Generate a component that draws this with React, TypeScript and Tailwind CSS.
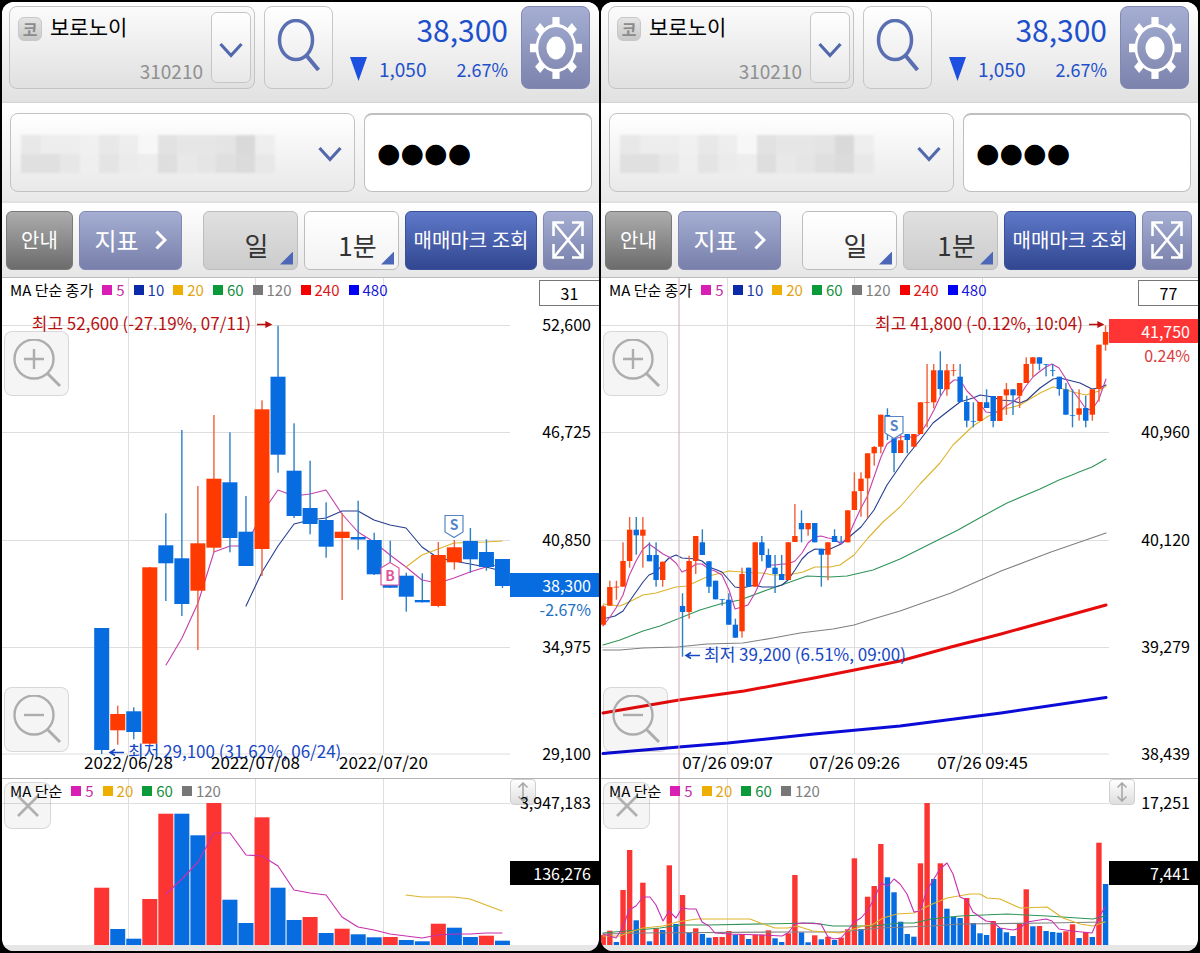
import React, { useState } from 'react';

// [slot, high, body top, body bottom, low, rising]
type Candle = [number, number, number, number, number, boolean];
type Line = { color: string; width?: number; points: string };
type Period = { label: string; square: string; text: string };
type Mark = { x: number; y: number; kind: 'B' | 'S' };
type Note = { x: number; y: number; text: string };

interface ChartData {
  step: number;
  start: number;
  bodyWidth: number;
  candles: Candle[];
  lines: Line[];
  marks: Mark[];
  high: Note;
  low: Note;
  dates: string[];
  crosshair?: number;
  volumes: number[];
  rising: number[];
  volumeLines: Line[];
}

const PINK = '#c43fae';
const NAVY = '#263c8f';
const GOLD = '#ddb32c';
const GREEN = '#2f9457';
const GRAY = '#808080';

const TOP = 278;
const VOLUME_TOP = 779;
const BASELINE = 945;
const gridX = [126.5, 253.5, 381.5];
const gridY = [325.5, 432.5, 540.5, 647.5, 754];

const periods: Period[] = [
  { label: '5', square: 'bg-[#d81eb4]', text: 'text-[#c42ca8]' },
  { label: '10', square: 'bg-[#0a2aa8]', text: 'text-[#1a3aa8]' },
  { label: '20', square: 'bg-[#eeae00]', text: 'text-[#dfa512]' },
  { label: '60', square: 'bg-[#0b9a3a]', text: 'text-[#129040]' },
  { label: '120', square: 'bg-[#777777]', text: 'text-[#808080]' },
  { label: '240', square: 'bg-[#f40000]', text: 'text-[#e01414]' },
  { label: '480', square: 'bg-[#0000f4]', text: 'text-[#1414d8]' },
];
const volumePeriods = [periods[0], periods[2], periods[3], periods[4]];

const daily: ChartData = {
  step: 16.03,
  start: 99.7,
  bodyWidth: 15,
  candles: [
    [0, 628, 628, 750, 754, false],
    [1, 705.7, 714, 730.3, 744.7, true],
    [2, 707.3, 711.3, 732, 739.3, false],
    [3, 567, 567.3, 743.7, 745, true],
    [4, 513.3, 545.3, 563.3, 601, false],
    [5, 430, 558.3, 604, 616, false],
    [6, 486, 543.3, 590.7, 650, true],
    [7, 415, 478.7, 547.7, 552, true],
    [8, 432.3, 482.3, 538, 552.3, false],
    [9, 496, 531.7, 566, 566, false],
    [10, 400.3, 409.3, 549, 576, true],
    [11, 325.7, 376.7, 454.7, 472.7, false],
    [12, 423.3, 470.7, 516, 518, false],
    [13, 460.7, 508, 524, 534.3, false],
    [14, 502.3, 520, 546.7, 557.7, false],
    [15, 513, 531.7, 538, 600, true],
    [16, 500.7, 537, 539.5, 549.7, false],
    [17, 532.7, 540, 574.3, 575, false],
    [18, 540.7, 585, 587.7, 588, false],
    [19, 572.7, 575.7, 596.7, 611.7, false],
    [20, 573.3, 600, 602.3, 602.5, false],
    [21, 542, 555, 606, 607.3, true],
    [22, 540, 547.3, 562.3, 569.7, true],
    [23, 528, 541, 559.3, 572.7, false],
    [24, 539.3, 552, 567, 570.7, false],
    [25, 559, 559, 586, 588, false],
  ],
  lines: [
    { color: PINK, points: '164,665 180,638 196,603 212,552 228,546 244,546 260,513 276,490 292,496 308,494 324,490 340,514 356,532 372,542 388,555 404,567 420,580 436,583 452,578 468,572 484,567 500,564' },
    { color: NAVY, points: '244,606 260,572 276,546 292,524 308,520 324,518 340,511 356,511 372,520 388,525 404,528 420,547 436,558 452,561 468,564 484,567 500,571' },
    { color: GOLD, points: '404,567 420,555 436,549 452,543 484,542 500,541' },
  ],
  marks: [
    { x: 388, y: 562, kind: 'B' },
    { x: 452, y: 515, kind: 'S' },
  ],
  high: { x: 249, y: 324.5, text: '최고 52,600 (-27.19%, 07/11)' },
  low: { x: 126, y: 752.5, text: '최저 29,100 (31.62%, 06/24)' },
  dates: ['2022/06/28', '2022/07/08', '2022/07/20'],
  volumes: [
    887.7, 929, 938.7, 899, 813.7, 813.7, 835.3, 803, 899.7, 923, 817.3, 887.7, 920, 917, 933, 928.7, 934.3, 937.3, 937, 940, 941.3, 923.7, 927.7, 937, 935.7, 940.7,
  ],
  rising: [0, 3, 4, 7, 10, 13, 15, 18, 21, 24],
  volumeLines: [
    { color: '#c72fb0', points: '164,894 180,879 196,862 212,833 228,833 244,855 260,856 276,866 292,890 308,893 324,895 340,917 356,927 372,930 388,934 404,936 420,938 436,935 452,934 468,934 484,933 500,933' },
    { color: GOLD, points: '404,895 420,897 436,897 452,897 468,899 484,905 500,911' },
  ],
};

const minute: ChartData = {
  step: 6.61,
  start: 2.2,
  bodyWidth: 5.4,
  candles: [
    [0, 605, 606.3, 624.7, 626, true],
    [1, 580.7, 587, 605.7, 605.7, true],
    [2, 580.7, 586.7, 587.5, 599.7, true],
    [3, 542.3, 561, 586.7, 586.7, true],
    [4, 517, 529.7, 561, 567.7, true],
    [5, 517, 529.7, 535.3, 554.7, false],
    [6, 517, 529.7, 535.7, 567.7, true],
    [7, 542.3, 555, 561.3, 561.3, false],
    [8, 542.3, 555, 580, 586.7, false],
    [9, 561.7, 561.7, 580, 586.7, true],
    [12, 593.3, 606, 612, 656.7, false],
    [13, 555.7, 561, 612, 618.7, true],
    [14, 536, 536, 561, 574, true],
    [15, 529.3, 542.3, 555, 555, false],
    [16, 561.3, 561.3, 586.7, 593, false],
    [17, 580.7, 580.7, 599.3, 599.3, false],
    [18, 599.3, 599.3, 600, 605.7, false],
    [19, 593.3, 599.7, 624.7, 624.7, false],
    [20, 618.7, 624.7, 637.7, 637.7, false],
    [21, 567.7, 574, 631.3, 637.7, true],
    [22, 567.7, 567.7, 586.7, 586.7, false],
    [23, 542.3, 542.3, 586.7, 586.7, true],
    [24, 536, 542.3, 555, 561.3, false],
    [25, 548.7, 555, 567.7, 567.7, false],
    [26, 555, 567.7, 574, 593, false],
    [27, 555, 574, 580, 580, false],
    [28, 542.3, 542.3, 580, 580, true],
    [29, 504, 536, 542, 542, true],
    [30, 510.3, 523, 529.3, 542.3, false],
    [31, 523, 523, 529.3, 535.7, true],
    [32, 523, 523, 542.3, 542.3, false],
    [33, 548.7, 548.7, 554.7, 586.7, false],
    [34, 542.3, 542.3, 554.7, 580.3, true],
    [35, 529.3, 536, 542, 542, false],
    [36, 536, 541.7, 542.5, 542.5, false],
    [37, 510.3, 510.3, 542.3, 542.3, true],
    [38, 472.3, 491.3, 510, 510, true],
    [39, 472.3, 478.7, 491, 516.7, true],
    [40, 453.3, 453.3, 478.3, 518.3, true],
    [41, 446, 447, 453.3, 465.7, true],
    [42, 414.7, 414.7, 446.7, 453.3, true],
    [43, 408.3, 415, 433, 440, false],
    [44, 425, 438.3, 453, 472.3, false],
    [45, 435, 440.3, 453, 453, true],
    [46, 434, 434, 440, 453.3, false],
    [47, 434, 434, 446.7, 446.7, true],
    [48, 402.3, 402.3, 434, 434, true],
    [49, 364, 402, 402.7, 427.3, true],
    [50, 364, 370.3, 402.3, 408.3, true],
    [51, 351.3, 370.3, 389, 395.7, false],
    [52, 364, 370.3, 389.3, 395.7, true],
    [53, 364, 370, 370.7, 376.3, true],
    [54, 364, 376.7, 402, 402, false],
    [55, 395.7, 402, 420.7, 427.3, false],
    [56, 402.3, 421, 421.7, 427.3, false],
    [57, 402, 402, 421, 421, true],
    [58, 389.3, 402.3, 408, 408, false],
    [59, 396, 396, 421, 427.3, false],
    [60, 396, 396, 421, 421, true],
    [61, 383, 389.3, 395.3, 415, true],
    [62, 389.3, 389.3, 395.3, 415, false],
    [63, 383, 383, 395.7, 408, true],
    [64, 357.3, 364, 383, 383, true],
    [65, 357.3, 357.3, 363.7, 376.7, true],
    [66, 357.3, 357.3, 363.7, 370.3, false],
    [67, 364, 364, 364.7, 376.3, false],
    [68, 364, 370, 370.7, 376.3, false],
    [69, 376.7, 376.7, 389, 395.7, false],
    [70, 383, 389.3, 414.7, 414.7, false],
    [71, 389.3, 415, 415.7, 427.3, false],
    [72, 389.3, 408.3, 414.7, 420.7, true],
    [73, 395.7, 408, 420.7, 427.3, false],
    [74, 389.3, 389.3, 414.7, 420.7, true],
    [75, 344.7, 344.7, 389, 401.7, true],
    [76, 325.7, 332, 344.7, 350.7, true],
  ],
  lines: [
    { color: GRAY, points: '2,650 19,650 42,648 76,647 106,644 142,643 172,638 199,633 232,629 253,625 272,619 299,611 350,593 400,571 450,552 505,533' },
    { color: GREEN, points: '2,645 19,640 42,631 59,626 79,618 99,610 119,604 139,600 166,590 192,581 206,576 229,577 246,576 272,570 299,559 357,530 382,516 406,503 439,489 458,480 471,475 478,472 491,467 505,459' },
    { color: GOLD, points: '2,604 19,606 28,602 42,595 55,593 75,587 86,586 99,580 108,576 128,571 154,573 161,573 172,575 187,575 202,572 214,567 229,567 239,565 253,555 267,538 282,522 299,507 319,484 339,463 352,445 372,426 386,417 399,410 412,407 419,405 439,393 452,387 459,388 472,392 485,395 498,391 505,386' },
    { color: NAVY, points: '2,618 6,618 14,616 22,611 28,602 35,592 42,582 48,575 55,572 62,564 68,558 75,555 81,558 95,559 101,561 108,567 116,570 121,572 128,580 134,587 141,588 154,585 161,587 174,587 181,585 187,580 194,570 201,559 207,553 214,549 227,550 240,544 247,538 260,527 273,510 286,485 306,456 319,440 332,423 346,412 359,402 372,398 379,395 392,397 399,400 412,401 419,403 426,400 439,388 452,379 459,378 479,383 491,389 498,388 505,385' },
    { color: PINK, points: '2,626 9,617 15,608 22,595 28,576 35,561 42,549 48,544 55,549 62,554 68,557 75,563 81,572 88,569 95,564 101,564 108,569 114,571 121,575 128,590 134,609 141,607 147,605 154,593 161,578 167,565 174,565 181,564 187,564 194,561 201,553 207,543 214,537 220,536 227,538 233,539 240,544 247,537 253,523 260,508 266,497 273,477 280,457 286,444 293,439 300,437 306,436 313,438 319,434 326,423 333,410 339,397 346,386 353,380 356,380 361,383 366,391 372,397 379,404 385,412 392,413 399,411 405,406 412,402 418,397 425,386 432,377 438,372 445,367 451,364 458,368 465,379 471,390 478,399 485,409 491,410 498,399 505,379' },
    { color: '#e60c0c', width: 3, points: '2,713 78,700 143,691 213,678 299,661 350,647 400,634 505,605' },
    { color: '#0c0cd8', width: 3, points: '2,753.5 78,747 127,743 213,734 299,726 400,713 505,697.5' },
  ],
  marks: [{ x: 293, y: 416, kind: 'S' }],
  high: { x: 482, y: 324.5, text: '최고 41,800 (-0.12%, 10:04)' },
  low: { x: 103, y: 655.5, text: '최저 39,200 (6.51%, 09:00)' },
  dates: ['07/26 09:07', '07/26 09:26', '07/26 09:45'],
  crosshair: 78,
  volumes: [
    935, 930.7, 942, 890, 850, 920.3, 882.7, 941.3, 928.3, 930, 865.3, 924, 895, 932.7, 928.3, 934, 937.7, 937, 937, 931,
    934.7, 934, 939, 934.7, 934.7, 930.3, 938.3, 942, 933.3, 875, 932.3, 942.3, 935.3, 939.3, 936.7, 940, 937.7, 929.3, 858.3, 929,
    896.7, 886, 844, 877.3, 892.3, 921.7, 934, 936.7, 863.3, 803, 879, 863.3, 908.7, 916.7, 918, 898, 923, 933.3, 935, 921,
    928, 932.3, 936, 923.3, 889.3, 926.3, 926, 931, 932, 932.7, 931.3, 924.3, 938, 932, 937, 842.7, 884,
  ],
  rising: [
    0, 1, 3, 4, 6, 8, 10, 12, 14, 17, 18, 19, 21, 23, 24, 25, 28, 29, 32, 34, 36, 37, 38, 40, 41, 42, 48, 49, 51, 55, 59, 63, 64, 66, 70, 71, 73, 75,
  ],
  volumeLines: [
    { color: GRAY, points: '2,934 40,933 180,932 239,932 279,928 330,926 359,924 446,923 504,922' },
    { color: GREEN, points: '2,933 36,930 59,928 80,925 106,925 212,923 232,926 272,926 299,923 313,923 330,919 359,916 406,914 446,916 492,919 504,916' },
    { color: GOLD, points: '2,936 19,936 29,932 42,928 62,926 76,922 96,919 122,919 149,919 162,924 174,928 187,928 196,926 212,931 239,933 253,929 262,926 271,925 282,918 296,914 313,913 329,905 346,898 369,894 379,894 386,898 399,899 419,908 446,907 462,918 479,924 492,926 504,922' },
    { color: '#c72fb0', points: '2,934 15,938 22,927 28,910 35,906 42,897 49,897 55,905 62,921 68,911 75,918 81,908 88,909 95,909 101,922 108,926 114,933 128,934 161,935 181,936 187,933 194,924 201,923 220,924 227,937 233,939 240,938 247,930 253,922 260,918 267,910 273,899 280,883 287,886 293,879 299,884 306,894 313,912 319,911 326,890 339,869 346,863 352,874 359,897 366,900 372,912 385,921 392,922 399,928 412,930 419,928 426,922 445,919 451,921 458,929 471,931 491,933 498,917 504,907' },
  ],
};

// shades of the masked account number, two rows
const mask = [
  ['bg-[#e8e8e8]', 'bg-[#ededed]', 'bg-[#ededed]', 'bg-[#f0f0f0]', 'bg-[#e8e8e8]', 'bg-[#ededed]', 'bg-[#f7f7f7]', 'bg-[#e2e2e2]', 'bg-[#e6e6e6]', 'bg-[#e6e6e6]', 'bg-[#e4e4e4]', 'bg-[#d9d9d9]', 'bg-[#eeeeee]'],
  ['bg-[#e0e0e0]', 'bg-[#e0e0e0]', 'bg-[#e7e7e7]', 'bg-[#efefef]', 'bg-[#e4e4e4]', 'bg-[#ebebeb]', 'bg-[#ededed]', 'bg-[#dedede]', 'bg-[#e8e8e8]', 'bg-[#e5e5e5]', 'bg-[#dfdfdf]', 'bg-[#dbdbdb]', 'bg-[#e8e8e8]'],
];

const Chevron: React.FC<{ className: string }> = ({ className }) => (
  <svg className={className} viewBox="0 0 24 16" fill="none" stroke="#5268ad" strokeWidth="3.2" aria-hidden="true">
    <path d="M1.500 2L12 13.500 22.500 2" />
  </svg>
);

const GearIcon: React.FC = () => (
  <svg className="h-[62px] w-[52px]" viewBox="-26 -31 52 62" fill="#fff" aria-hidden="true">
    <g transform="scale(1 1.19)">
      {[0, 45, 90, 135, 180, 225, 270, 315].map((a) => (
        <rect key={a} x="-3.6" y="-26" width="7.2" height="7" transform={`rotate(${a})`} />
      ))}
      <circle r="19" fill="none" stroke="#fff" strokeWidth="2.6" />
      <circle r="9.6" />
    </g>
  </svg>
);

const Zoomer: React.FC<{ plus?: boolean }> = ({ plus }) => (
  <svg className="size-[50px]" viewBox="0 0 50 50" fill="none" stroke="#adadad" strokeWidth="2.4" aria-hidden="true">
    <circle cx="22" cy="20" r="19.5" />
    <path d="M35 34l13 13" strokeWidth="3" />
    <path d={plus ? 'M12 20h20M22 10v20' : 'M12 20h20'} />
  </svg>
);

const Legend: React.FC<{ title: string; items: Period[] }> = ({ title, items }) => (
  <div className="absolute top-[2px] left-2 flex items-center gap-[9px] text-[15px] leading-5 whitespace-nowrap">
    <span className="text-black">{title}</span>
    {items.map((p) => (
      <span key={p.label} className={`flex items-center gap-1 ${p.text}`}>
        <i className={`size-[10px] ${p.square}`} />
        {p.label}
      </span>
    ))}
  </div>
);

const Polylines: React.FC<{ lines: Line[] }> = ({ lines }) => (
  <>
    {lines.map((l) => (
      <polyline key={l.color} points={l.points} fill="none" stroke={l.color} strokeWidth={l.width ?? 1.1} strokeLinejoin="round" strokeLinecap="round" />
    ))}
  </>
);

const Marker: React.FC<{ mark: Mark }> = ({ mark }) => {
  const buy = mark.kind === 'B';
  const color = buy ? '#e0559a' : '#5585c8';
  return (
    <g transform={`translate(${mark.x} ${mark.y})`}>
      <path d={buy ? 'M-9 23V6L0 .5 9 6v17z' : 'M-9 .5H9V17L0 22.500-9 17z'} fill="#fff" stroke={color} strokeWidth="1.2" />
      <text y={buy ? 19 : 15} textAnchor="middle" fontSize="14" fontWeight="700" fill={color}>
        {mark.kind}
      </text>
    </g>
  );
};

const PriceChart: React.FC<{ data: ChartData }> = ({ data }) => (
  <svg className="block h-auto w-full" viewBox={`0 ${TOP} 508 500`} role="img" aria-label={data.high.text}>
    <g stroke="#dedede">
      {gridX.map((x) => <line key={x} x1={x} x2={x} y1={TOP} y2={754} />)}
      {gridY.map((y) => <line key={y} x1="0" x2="508" y1={y} y2={y} />)}
    </g>
    <Polylines lines={data.lines} />
    {data.candles.map(([i, high, top, bottom, low, up]) => {
      const x = data.start + i * data.step;
      return (
        <g key={i} fill={up ? '#ff3a00' : '#076ce0'}>
          <rect x={x - 0.7} y={high} width="1.4" height={low - high} fill={up ? '#f0603a' : '#2f7fc4'} />
          <rect x={x - data.bodyWidth / 2} y={top} width={data.bodyWidth} height={bottom - top} />
        </g>
      );
    })}
    {data.crosshair && <line x1={data.crosshair} x2={data.crosshair} y1={TOP} y2="778" stroke="#d4a9b4" />}
    {data.marks.map((m) => <Marker key={m.x} mark={m} />)}
    <g fill="#b80f0f" stroke="#b80f0f">
      <path d={`M${data.high.x + 6} ${data.high.y}h14m-5-2.500l5 2.500-5 2.500z`} strokeWidth="1.3" />
      <text x={data.high.x} y={data.high.y + 5} fontSize="17" textAnchor="end" stroke="none">{data.high.text}</text>
    </g>
    <g fill="#1747c4" stroke="#1747c4">
      <path d={`M${data.low.x - 4} ${data.low.y}h-14m5-3l-5 3 5 3`} fill="none" strokeWidth="1.500" />
      <text x={data.low.x} y={data.low.y + 5} fontSize="17" stroke="none">{data.low.text}</text>
    </g>
    {data.dates.map((d, i) => (
      <text key={d} x={gridX[i]} y="769" fontSize="17" textAnchor="middle">{d}</text>
    ))}
  </svg>
);

const VolumeChart: React.FC<{ data: ChartData }> = ({ data }) => (
  <svg className="block h-auto w-full" viewBox={`0 ${VOLUME_TOP} 508 166`} role="img" aria-label="거래량">
    <g stroke="#dedede">
      {gridX.map((x) => <line key={x} x1={x} x2={x} y1={VOLUME_TOP} y2={BASELINE} />)}
      <line x1="0" x2="508" y1="803.500" y2="803.500" />
    </g>
    {data.volumes.map((y, i) => (
      <rect
        key={i}
        x={data.start + i * data.step - data.bodyWidth / 2}
        y={y}
        width={data.bodyWidth}
        height={BASELINE - y}
        fill={data.rising.includes(i) ? '#fc3532' : '#076ce0'}
      />
    ))}
    {data.crosshair && <line x1={data.crosshair} x2={data.crosshair} y1={VOLUME_TOP} y2={BASELINE} stroke="#d4a9b4" />}
    <Polylines lines={data.volumeLines} />
  </svg>
);

interface PanelProps {
  data: ChartData;
  count: string;
  prices: string[];
  tag: { price: string; rate: string; box: string; text: string };
  volumeMax: string;
  volumeNow: string;
  unit: 'day' | 'minute';
}

const glass = 'absolute flex items-center justify-center rounded-lg border border-black/12 bg-black/4';
const periodButton = 'relative h-[59px] w-[95px] rounded-md border border-[#bdbdbd] pt-2 pl-3 text-[26px] text-[#333]';
const periodOn = 'bg-linear-to-b from-[#e0e0e0] to-[#cccccc]';
const periodOff = 'bg-linear-to-b from-white to-[#f2f2f2]';
const corner = 'absolute right-1 bottom-1 size-[13px] bg-[#4c67b8] [clip-path:polygon(100%_0,100%_100%,0_100%)]';

const Panel: React.FC<PanelProps> = ({ data, count, prices, tag, volumeMax, volumeNow, unit }) => {
  const [password, setPassword] = useState('●●●●');
  const [active, setActive] = useState(unit);

  return (
    <section className="min-w-0 flex-1 overflow-hidden rounded-xl bg-white">
      <header className="flex h-[101px] items-start gap-[9px] border-b border-[#d4d4d4] bg-linear-to-b from-white to-[#e1e1e1] py-1 pr-[9px] pl-[7px]">
        <div className="flex h-[83px] flex-1 rounded-lg border border-[#c3c3c3] bg-linear-to-b from-[#fbfbfb] to-[#e0e0e0] p-[5px] pr-[3px]">
          <div className="flex flex-1 flex-col justify-between pr-2 pl-[3px]">
            <div className="flex items-start gap-2">
              <span className="mt-[5px] flex size-6 items-center justify-center rounded-md border border-[#c8c8c8] bg-linear-to-b from-[#e4e4e4] to-[#c8c8c8] text-base font-bold text-[#8b8b8b]">
                코
              </span>
              <span className="text-[21px] leading-7 text-black">보로노이</span>
            </div>
            <span className="text-right text-[19px] leading-6 text-[#909090]">310210</span>
          </div>
          <button type="button" aria-label="종목 선택" className="flex h-[71px] w-10 items-center justify-center rounded-md border border-[#c6c6c6] bg-linear-to-b from-white to-[#e8e8e8] pt-1">
            <Chevron className="h-4 w-6" />
          </button>
        </div>
        <button type="button" aria-label="검색" className="flex h-[83px] w-[69px] justify-center rounded-lg border border-[#c6c6c6] bg-linear-to-b from-white to-[#e6e6e6] pt-3">
          <svg className="h-[52px] w-11" viewBox="0 0 44 52" fill="none" stroke="#5a6eb2" strokeWidth="3.500">
            <ellipse cx="19" cy="21" rx="16.500" ry="19.500" />
            <path d="M29 36l12.500 15" strokeWidth="4" />
          </svg>
        </button>
        <div className="flex w-[170px] flex-col gap-[10px] pt-[5px] pr-1 pl-2 text-[#1f50cc]">
          <span className="text-right text-3xl leading-9">38,300</span>
          <div className="flex items-center justify-between text-[19px] leading-6">
            <span className="flex items-center gap-3">
              <svg className="h-6 w-[17px]" viewBox="0 0 17 24" fill="#1d4fe0" aria-hidden="true">
                <path d="M0 0h17L8.500 24z" />
              </svg>
              1,050
            </span>
            <span className="text-lg leading-6">2.67%</span>
          </div>
        </div>
        <button type="button" aria-label="설정" className="flex h-[83px] w-[69px] items-center justify-center rounded-lg border border-[#8288b4] bg-linear-to-b from-[#a5aed2] to-[#7c83ad]">
          <GearIcon />
        </button>
      </header>

      <div className="flex h-[100px] items-center gap-[9px] border-b-2 border-[#e0e0e0] bg-linear-to-b from-white to-[#e9e9e9] pr-[7px] pl-2">
        <button type="button" aria-label="계좌 선택" className="flex h-[79px] flex-1 items-center justify-between rounded-lg border border-[#c2c2c2] bg-linear-to-b from-white to-[#e9e9e9] pt-1 pr-3 pl-2.5">
          <span className="grid w-[254px] grid-cols-13 blur-[1px]">
            {mask.flat().map((shade, i) => <i key={i} className={`h-[19px] ${shade}`} />)}
          </span>
          <Chevron className="h-4 w-6" />
        </button>
        <input
          aria-label="비밀번호"
          value={password}
          onChange={(e) => setPassword(e.target.value)}
          autoComplete="off"
          className="h-[79px] w-[228px] rounded-lg border border-t-2 border-[#bfbfbf] bg-white px-3 font-['DejaVu_Sans'] text-[27px] text-black outline-none"
        />
      </div>

      <nav className="flex h-[75px] items-center gap-1.5 border-b border-[#bcbcbc] bg-linear-to-b from-white to-[#e6e6e6] pr-1.5 pl-1">
        <button type="button" className="h-[59px] w-[67px] rounded-md border border-[#7a7a7a] bg-linear-to-b from-[#adadad] to-[#6c6c6c] text-xl text-white">
          안내
        </button>
        <button type="button" className="flex h-[59px] w-[103px] items-center justify-center gap-4 rounded-md border border-[#8288b4] bg-linear-to-b from-[#a5aed2] to-[#7880ab] text-2xl text-white">
          지표
          <svg className="h-5 w-3" viewBox="0 0 12 20" fill="none" stroke="#fff" strokeWidth="3">
            <path d="M1.500 1.500L10 10l-8.500 8.500" />
          </svg>
        </button>
        <button type="button" onClick={() => setActive('day')} className={`${periodButton} ml-[15px] ${active === 'day' ? periodOn : periodOff}`}>
          일
          <i className={corner} />
        </button>
        <button type="button" onClick={() => setActive('minute')} className={`${periodButton} ${active === 'minute' ? periodOn : periodOff}`}>
          1분
          <i className={corner} />
        </button>
        <button type="button" className="h-[59px] flex-1 rounded-md border border-[#3c509a] bg-linear-to-b from-[#5f79c9] to-[#324791] text-xl whitespace-nowrap text-white">
          매매마크 조회
        </button>
        <button type="button" aria-label="전체 화면" className="flex h-[59px] w-[50px] items-center justify-center rounded-md border border-[#8288b4] bg-linear-to-b from-[#a5aed2] to-[#7880ab]">
          <svg className="h-[38px] w-8" viewBox="0 0 32 38" fill="none" stroke="#fff" strokeWidth="2.600">
            <path d="M2 2l28 34M30 2L2 36M1.500 15V1.500H12M20 1.500h10.500V15M1.500 23v13.500H12M20 36.500h10.500V23" />
          </svg>
        </button>
      </nav>

      <div className="flex border-b border-[#b5b5b5]">
        <div className="relative min-w-0 flex-1">
          <PriceChart data={data} />
          <Legend title="MA 단순 종가" items={periods} />
          <button type="button" aria-label="확대" className={`${glass} top-[53px] left-[2px] size-[65px]`}>
            <Zoomer plus />
          </button>
          <button type="button" aria-label="축소" className={`${glass} bottom-[26px] left-[2px] size-[65px]`}>
            <Zoomer />
          </button>
        </div>
        <div className="relative flex w-[89px] shrink-0 flex-col justify-between pt-9 pr-2 pb-[15px] text-right text-base leading-5">
          {prices.map((p, i) => <span key={i} className="h-5">{p}</span>)}
          <span className="absolute top-[2px] right-0 h-[26px] w-[60px] border border-r-0 border-[#777] bg-white text-center leading-6">{count}</span>
          <div className={`absolute right-0 left-0 ${tag.box}`}>
            <div className="bg-current pr-2 leading-6">
              <span className="text-white">{tag.price}</span>
            </div>
            <div className={`pr-2 leading-6 ${tag.text}`}>{tag.rate}</div>
          </div>
        </div>
      </div>

      <div className="flex">
        <div className="relative min-w-0 flex-1">
          <button type="button" aria-label="닫기" className={`${glass} top-[3px] left-[2px] size-[47px]`}>
            <svg className="size-[22px]" viewBox="0 0 22 22" fill="none" stroke="#b0b0b0" strokeWidth="2.600">
              <path d="M1 1l20 20M21 1L1 21" />
            </svg>
          </button>
          <VolumeChart data={data} />
          <Legend title="MA 단순" items={volumePeriods} />
        </div>
        <div className="relative w-[89px] shrink-0 text-right text-base">
          <button type="button" aria-label="높이 조절" className="absolute top-0 left-0 flex size-[26px] items-center justify-center rounded-sm border border-[#cfcfcf] bg-linear-to-b from-white to-[#dedede]">
            <svg className="h-5 w-3" viewBox="0 0 12 20" fill="none" stroke="#a8a8a8" strokeWidth="1.600">
              <path d="M6 1v18M1.500 5.500L6 1l4.500 4.500M1.500 14.500L6 19l4.500-4.500" />
            </svg>
          </button>
          <span className="absolute top-[13px] right-2 leading-5">{volumeMax}</span>
          <span className="absolute top-[82px] right-0 left-0 bg-black pr-2 leading-6 text-white">{volumeNow}</span>
        </div>
      </div>
      <footer className="h-[6px] bg-[#e6e6e6]" />
    </section>
  );
};

const App: React.FC = () => (
  <main className="flex min-h-[953px] items-start gap-[2px] bg-black px-[2px] pt-[2px] font-['Noto_Sans_CJK_KR',sans-serif] text-black">
    <Panel
      data={daily}
      count="31"
      prices={['52,600', '46,725', '40,850', '34,975', '29,100']}
      tag={{ price: '38,300', rate: '-2.67%', box: 'top-[295px] text-[#076ce0]', text: 'text-[#1c70c4]' }}
      volumeMax="3,947,183"
      volumeNow="136,276"
      unit="day"
    />
    {/* the current price tag takes the place of the top label */}
    <Panel
      data={minute}
      count="77"
      prices={['', '40,960', '40,120', '39,279', '38,439']}
      tag={{ price: '41,750', rate: '0.24%', box: 'top-[41px] text-[#ff3535]', text: 'text-[#dc3c3c]' }}
      volumeMax="17,251"
      volumeNow="7,441"
      unit="minute"
    />
  </main>
);

export default App;
